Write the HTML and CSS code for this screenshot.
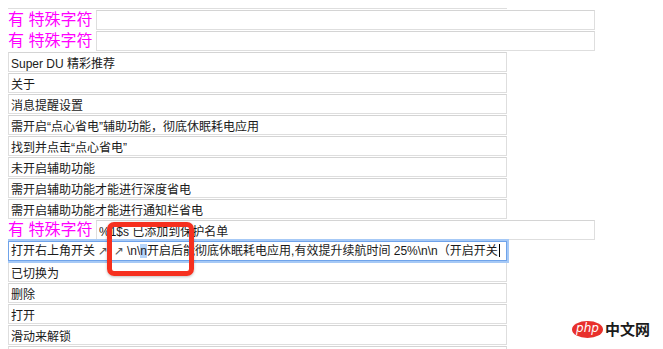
FILE: index.html
```html
<!DOCTYPE html>
<html lang="zh-CN">
<head>
    <meta charset="UTF-8">
    <meta name="viewport" content="width=device-width, initial-scale=1.0">
    <title>strings</title>
    <link rel="stylesheet" href="styles.css">
</head>
<body>
    <div class="list">
        <input class="field" value="ROOT权限">
        <div class="special"><span class="tag">有 特殊字符</span><input class="field"></div>
        <div class="special"><span class="tag">有 特殊字符</span><input class="field"></div>
        <input class="field" value="Super DU 精彩推荐">
        <input class="field" value="关于">
        <input class="field" value="消息提醒设置">
        <input class="field" value="需开启“点心省电”辅助功能，彻底休眠耗电应用">
        <input class="field" value="找到并点击“点心省电”">
        <input class="field" value="未开启辅助功能">
        <input class="field" value="需开启辅助功能才能进行深度省电">
        <input class="field" value="需开启辅助功能才能进行通知栏省电">
        <div class="special"><span class="tag">有 特殊字符</span><input class="field" value="%1$s 已添加到保护名单"></div>
        <div class="field focused">打开右上角开关<span class="arrow">↗</span><span class="arrow">↗</span>\n\<span class="sel">n</span>开启后能彻底休眠耗电应用,有效提升续航时间 25%\n\n（开启开关<span class="caret"></span></div>
        <input class="field" value="已切换为">
        <input class="field" value="删除">
        <input class="field" value="打开">
        <input class="field" value="滑动来解锁">
        <input class="field">
    </div>

    <!-- annotation and watermark drawn over the screenshot -->
    <div class="mark"></div>
    <div class="watermark">
        <span class="php">php</span>
        <span class="cn">中文网</span>
    </div>
</body>
</html>
```

FILE: styles.css
```css
body {
    margin: 8px;
    font-family: "Liberation Sans", "Noto Sans CJK SC", sans-serif;
    background-color: #ffffff;
    overflow: hidden;
}

.list {
    display: flex;
    flex-direction: column;
    align-items: flex-start;
    gap: 1px;
    margin-top: -19px;
}

.field {
    display: block;
    width: 499px;
    height: 20px;
    box-sizing: border-box;
    margin: 0;
    padding: 0 2px;
    border: 1px solid #dedede;
    border-top-color: #d4d4d4;
    background-color: #ffffff;
    color: #1a1a1a;
    font-family: "Liberation Sans", "Noto Sans CJK SC", sans-serif;
    font-size: 12px;
    line-height: 18px;
    outline: none;
}

.special {
    display: flex;
    align-items: center;
    gap: 4px;
    height: 20px;
}

.tag {
    width: 84px;
    color: #ff00ff;
    font-size: 16px;
    line-height: 20px;
    white-space: nowrap;
}

.focused {
    position: relative;
    z-index: 1;
    border-color: #6fa3ea;
    box-shadow: 0 0 0 2px #a6c9f6;
    white-space: nowrap;
    overflow: hidden;
}

.arrow {
    display: inline-block;
    width: 16px;
    text-align: center;
    color: #555555;
    font-family: "DejaVu Sans", sans-serif;
}

.sel {
    background-color: #b5d5fb;
}

.caret {
    display: inline-block;
    width: 1px;
    height: 13px;
    margin-left: 1px;
    vertical-align: -2px;
    background-color: #000000;
}

.mark {
    position: absolute;
    left: 107px;
    top: 222px;
    width: 87px;
    height: 54px;
    box-sizing: border-box;
    border: 5px solid #f6301f;
    border-radius: 7px;
    box-shadow: 0 1px 3px rgba(0, 0, 0, 0.25);
    z-index: 2;
}

.watermark {
    position: absolute;
    left: 572px;
    top: 320px;
    display: flex;
    align-items: center;
    gap: 2px;
}

.php {
    display: inline-block;
    width: 31px;
    height: 17px;
    border-radius: 50%;
    background-color: #e8302c;
    color: #ffffff;
    font-family: "DejaVu Sans", sans-serif;
    font-size: 12px;
    font-style: italic;
    line-height: 15px;
    text-align: center;
}

.cn {
    color: #1b1b1b;
    font-family: "Noto Sans CJK SC", sans-serif;
    font-size: 15px;
    font-weight: 700;
    line-height: 18px;
}
```
